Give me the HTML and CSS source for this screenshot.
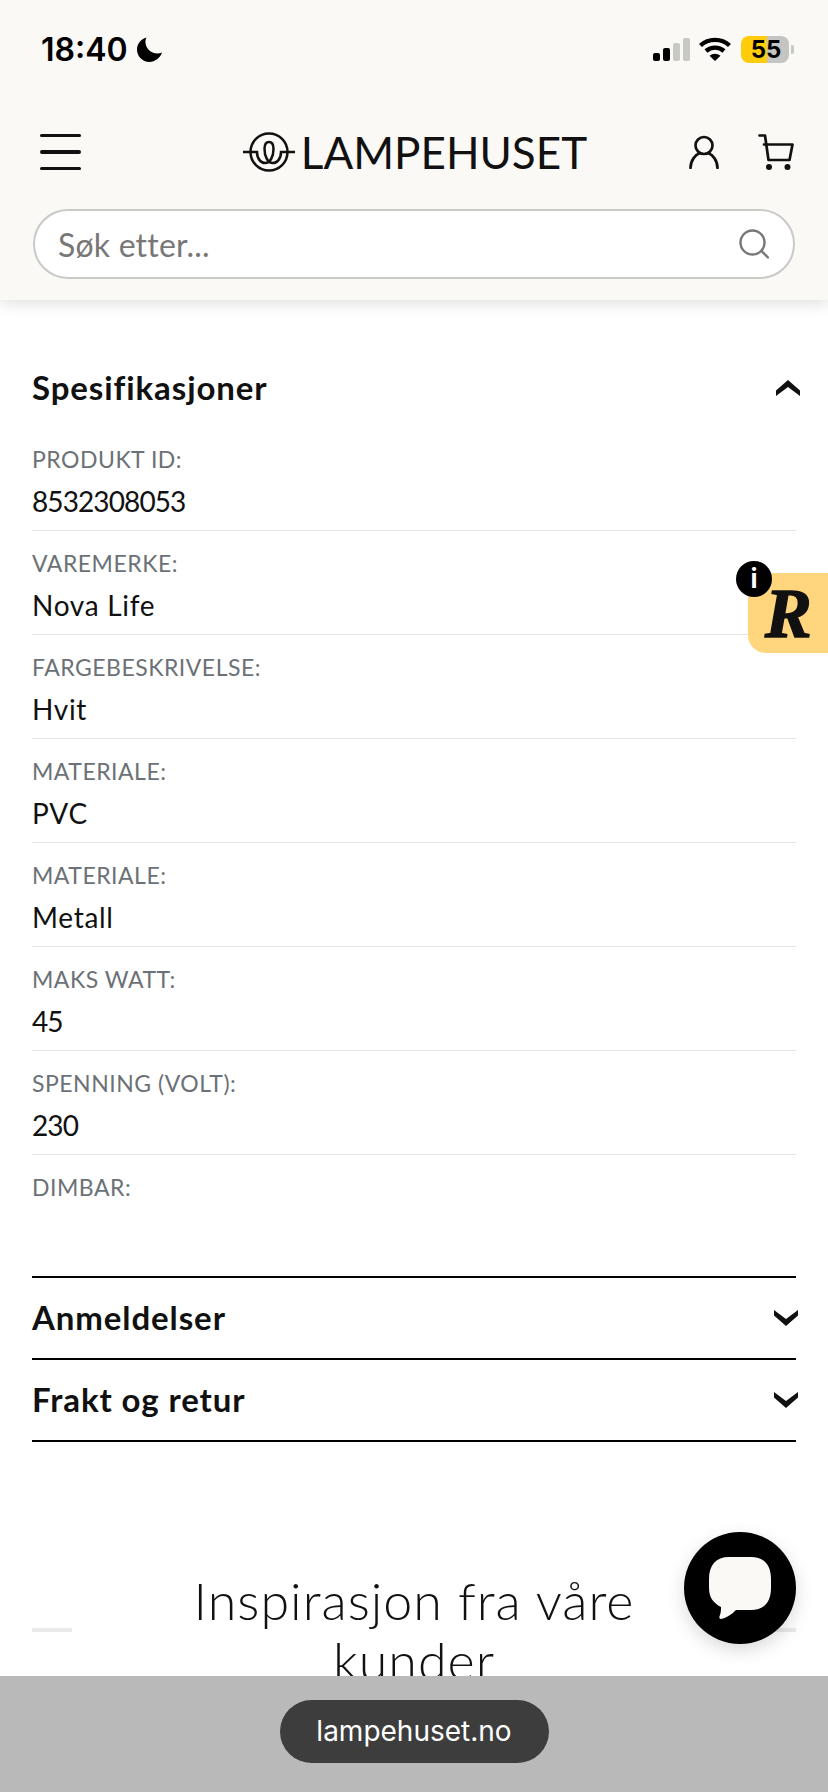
FILE: index.html
```html
<!DOCTYPE html>
<html lang="no">
<head>
  <meta charset="UTF-8">
  <meta name="viewport" content="width=device-width, initial-scale=1.0">
  <title>Lampehuset</title>
  <link rel="stylesheet" href="styles.css">
</head>
<body>
  <header class="site-header">
    <div class="status-bar">
      <div class="status-time">
        <span>18:40</span>
        <svg class="moon" viewBox="0 0 25 25"><path d="M9.500 0.500C3.800 2.200 0 7 0 12.600 0 19.500 5.500 25 12.400 25 18.200 25 23.200 21 25 15.600 23.600 16.200 22 16.500 20.400 16.500 13.700 16.500 8.400 11.200 8.400 4.500 8.400 3.100 8.800 1.700 9.500 0.500Z" fill="#000"/></svg>
      </div>
      <div class="status-icons">
        <div class="signal">
          <i class="bar bar-1"></i><i class="bar bar-2"></i><i class="bar bar-3 off"></i><i class="bar bar-4 off"></i>
        </div>
        <svg class="wifi" viewBox="0 0 32 24" fill="none" stroke="#000" stroke-width="4.400">
          <path d="M1.500 8.500C9.500 1 22.500 1 30.500 8.500"/>
          <path d="M7 14C12 9.500 20 9.500 25 14"/>
          <path d="M16 24L10.500 18.800C13.800 16 18.200 16 21.500 18.800Z" fill="#000" stroke="none"/>
        </svg>
        <div class="battery"><span class="battery-level">55</span></div>
        <i class="battery-nub"></i>
      </div>
    </div>

    <div class="nav-row">
      <div class="burger"><i></i><i></i><i></i></div>
      <div class="logo">
        <svg class="logo-mark" viewBox="0 0 52 40" fill="none" stroke="#111" stroke-width="2.500">
          <circle cx="26" cy="20" r="18.500"/>
          <path d="M0 20H14C14 27 18 31 22 31 27 31 30.500 25 30.500 17 30.500 12 29 10 26 10 23 10 21.500 12 21.500 17 21.500 25 25 31 30 31 34 31 38 27 38 20H52"/>
        </svg>
        <span class="logo-text">LAMPEHUSET</span>
      </div>
      <div class="nav-icons">
        <svg class="icon-user" viewBox="0 0 30 34" fill="none" stroke="#111" stroke-width="2.700" stroke-linecap="round">
          <circle cx="15" cy="10.500" r="8.500"/>
          <path d="M1.500 33C1.500 25 7 19.500 10 18.500M28.500 33C28.500 25 23 19.500 20 18.500"/>
        </svg>
        <svg class="icon-cart" viewBox="0 0 36 36" fill="none" stroke="#111" stroke-width="2.700" stroke-linecap="round" stroke-linejoin="round">
          <path d="M1.500 1.500H7L10.500 26H31.500L34.500 10.500H6"/>
          <circle cx="11" cy="33" r="3" fill="#111" stroke="none"/>
          <circle cx="29.500" cy="33" r="3" fill="#111" stroke="none"/>
        </svg>
      </div>
    </div>

    <div class="search-box">
      <span class="search-placeholder">Søk etter...</span>
      <svg class="icon-search" viewBox="0 0 30 30" fill="none" stroke="#777" stroke-width="2.400" stroke-linecap="round">
        <circle cx="13.500" cy="13.500" r="12"/>
        <path d="M22.500 22L29 28.500"/>
      </svg>
    </div>
  </header>

  <main class="content">
    <div class="spec-head">
      <h2 class="accordion-title">Spesifikasjoner</h2>
      <svg class="chevron chevron-up" viewBox="0 0 24 16"><path d="M12 0L24 10.500V16L12 7 0 16V10.500Z" fill="#111"/></svg>
    </div>

    <dl class="spec-list">
      <div class="spec-row"><dt>PRODUKT ID:</dt><dd class="spec-num">8532308053</dd></div>
      <div class="spec-row"><dt>VAREMERKE:</dt><dd>Nova Life</dd></div>
      <div class="spec-row"><dt>FARGEBESKRIVELSE:</dt><dd>Hvit</dd></div>
      <div class="spec-row"><dt>MATERIALE:</dt><dd>PVC</dd></div>
      <div class="spec-row"><dt>MATERIALE:</dt><dd>Metall</dd></div>
      <div class="spec-row"><dt>MAKS WATT:</dt><dd class="spec-num">45</dd></div>
      <div class="spec-row"><dt>SPENNING (VOLT):</dt><dd class="spec-num">230</dd></div>
      <div class="spec-row spec-last"><dt>DIMBAR:</dt><dd></dd></div>
    </dl>

    <div class="accordion">
      <h2 class="accordion-title">Anmeldelser</h2>
      <svg class="chevron" viewBox="0 0 24 16"><path d="M12 16L24 5.500V0L12 9 0 0V5.500Z" fill="#111"/></svg>
    </div>
    <div class="accordion accordion-end">
      <h2 class="accordion-title">Frakt og retur</h2>
      <svg class="chevron" viewBox="0 0 24 16"><path d="M12 16L24 5.500V0L12 9 0 0V5.500Z" fill="#111"/></svg>
    </div>

    <div class="inspiration">
      <i class="dash"></i>
      <h2 class="inspiration-title">Inspirasjon fra våre kunder</h2>
      <i class="dash"></i>
    </div>
  </main>

  <div class="review-badge">
    <span class="review-r">R</span>
    <span class="review-info">i</span>
  </div>

  <div class="chat-button">
    <svg viewBox="0 0 62 62"><path d="M20 0H42C55 0 62 8 62 22V31C62 45 55 53 42 53H27C22 58 17 61 12 62 10 62 10 60 11 58 12 55 12 52 12 50 4 46 0 40 0 31V22C0 8 7 0 20 0Z" fill="#fbf9f6"/></svg>
  </div>

  <div class="browser-bar">
    <div class="url-pill">lampehuset.no</div>
  </div>
</body>
</html>
```

FILE: styles.css
```css
* {
  box-sizing: border-box;
}
html, body {
  margin: 0;
  height: 1792px;
  overflow: hidden;
}
body {
  position: relative;
  background: #fff;
  color: #000;
  font-family: "Lato", "Noto Sans", sans-serif;
}
i {
  display: block;
}

/* header */
.site-header {
  height: 300px;
  background: #fbf9f6;
  box-shadow: 0 4px 14px rgba(0,0,0,0.12);
  position: relative;
  z-index: 2;
}
.status-bar {
  height: 98px;
  padding: 0 34px 0 41px;
  display: flex;
  justify-content: space-between;
  align-items: center;
}
.status-time {
  display: flex;
  align-items: center;
  gap: 9px;
  font-family: "Inter", sans-serif;
  font-size: 32px;
  font-weight: 600;
}
.moon {
  width: 25px;
  height: 25px;
}
.status-icons {
  display: flex;
  align-items: center;
}
.signal {
  display: flex;
  align-items: flex-end;
  gap: 2.500px;
  height: 23px;
  margin-right: 9px;
}
.bar {
  width: 7.500px;
  background: #000;
  border-radius: 2px;
}
.bar.off {
  background: #c8c8c5;
}
.bar-1 { height: 8px; }
.bar-2 { height: 13px; }
.bar-3 { height: 18px; }
.bar-4 { height: 23px; }
.wifi {
  width: 32px;
  height: 24px;
  margin-right: 10px;
}
.battery {
  width: 48px;
  height: 27px;
  border-radius: 8px;
  background: linear-gradient(to right, #ffcc0a 54%, #c4c4c2 54%);
  display: flex;
  justify-content: center;
  align-items: center;
}
.battery-level {
  font-family: "Inter", sans-serif;
  font-size: 24px;
  font-weight: 700;
  margin-left: 2px;
}
.battery-nub {
  width: 3px;
  height: 9px;
  margin-left: 2px;
  background: #c8c8c5;
  border-radius: 0 2px 2px 0;
}
.nav-row {
  height: 108px;
  padding: 0 34px 0 40px;
  display: flex;
  align-items: center;
  justify-content: space-between;
}
.burger {
  width: 41px;
  display: flex;
  flex-direction: column;
  gap: 13px;
}
.burger i {
  height: 3.500px;
  background: #111;
  border-radius: 2px;
}
.logo {
  display: flex;
  align-items: center;
  gap: 6px;
  margin-left: 60px;
}
.logo-mark {
  width: 52px;
  height: 40px;
}
.logo-text {
  font-size: 44px;
  line-height: 44px;
  color: #111;
}
.nav-icons {
  display: flex;
  align-items: center;
  gap: 39px;
}
.icon-user {
  width: 30px;
  height: 34px;
}
.icon-cart {
  width: 36px;
  height: 36px;
}
.search-box {
  height: 70px;
  margin: 3px 33px 0;
  padding: 0 24px 0 23px;
  background: #fff;
  border: 2px solid #c9c9c7;
  border-radius: 36px;
  display: flex;
  align-items: center;
  justify-content: space-between;
}
.search-placeholder {
  font-size: 32px;
  letter-spacing: 0.2px;
  color: #777;
}
.icon-search {
  width: 30px;
  height: 30px;
}

/* spec list */
.content {
  padding: 0 32px;
}
.spec-head {
  height: 48px;
  margin-top: 64px;
  margin-bottom: 15px;
  display: flex;
  align-items: center;
  justify-content: space-between;
}
.accordion-title {
  margin: 0;
  padding-bottom: 2px;
  font-size: 33px;
  font-weight: 700;
  letter-spacing: 0.9px;
  color: #111;
}
.chevron {
  width: 24px;
  height: 16px;
  margin-right: -2px;
}
.chevron-up {
  margin-right: -4px;
}
.spec-list {
  margin: 0;
}
.spec-row {
  height: 104px;
  padding-top: 16px;
  border-bottom: 1px solid #e4e4e4;
}
.spec-last {
  height: 121px;
  border-bottom: 0;
}
.spec-row dt {
  height: 32px;
  line-height: 32px;
  font-size: 23px;
  letter-spacing: 0.5px;
  color: #6b7176;
}
.spec-row dd {
  margin: 6px 0 0;
  height: 40px;
  line-height: 40px;
  font-size: 28px;
  letter-spacing: 0.7px;
  color: #111;
}
.spec-row dd.spec-num {
  letter-spacing: -0.9px;
}
.accordion {
  height: 82px;
  border-top: 2px solid #000;
  display: flex;
  align-items: center;
  justify-content: space-between;
}
.accordion-end {
  height: 84px;
  border-bottom: 2px solid #000;
}
.inspiration {
  margin-top: 128px;
  display: flex;
  align-items: center;
}
.dash {
  width: 40px;
  height: 4px;
  flex: none;
  background: #eaeaea;
}
.inspiration-title {
  flex: 1;
  margin: 0;
  padding: 0 100px;
  font-size: 52px;
  font-weight: 300;
  letter-spacing: 1px;
  line-height: 60px;
  text-align: center;
  color: #111;
}

/* things on top of the page */
.review-badge {
  position: absolute;
  top: 573px;
  right: 0;
  width: 80px;
  height: 80px;
  background: #ffd67e;
  border-radius: 0 0 0 18px;
  z-index: 3;
}
.review-r {
  position: absolute;
  left: 17px;
  top: 1px;
  font-family: "Liberation Serif", serif;
  font-size: 70px;
  font-weight: 700;
  font-style: italic;
  line-height: 80px;
  color: #111;
  -webkit-text-stroke: 1.5px #111;
}
.review-info {
  position: absolute;
  left: -12px;
  top: -12px;
  width: 36px;
  height: 36px;
  background: #000;
  color: #fff;
  border-radius: 50%;
  font-family: "Inter", sans-serif;
  font-size: 26px;
  font-weight: 700;
  line-height: 36px;
  text-align: center;
}
.chat-button {
  position: absolute;
  top: 1532px;
  left: 684px;
  width: 112px;
  height: 112px;
  background: #000;
  border-radius: 50%;
  box-shadow: 0 6px 18px rgba(0,0,0,0.15);
  display: flex;
  justify-content: center;
  align-items: center;
  z-index: 3;
}
.chat-button svg {
  width: 62px;
  height: 62px;
}
.browser-bar {
  position: absolute;
  left: 0;
  right: 0;
  top: 1676px;
  height: 116px;
  background: #b9b9b9;
  display: flex;
  justify-content: center;
  padding-top: 24px;
  z-index: 4;
}
.url-pill {
  width: 269px;
  height: 63px;
  background: #3d3d3d;
  border-radius: 32px;
  color: #fff;
  font-family: "Inter", sans-serif;
  font-size: 28px;
  line-height: 63px;
  text-align: center;
}
```
